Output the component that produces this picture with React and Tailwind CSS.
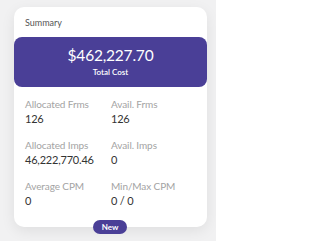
import React from "react";

const stats = [
  ["Allocated Frms", "126", "Avail. Frms", "126"],
  ["Allocated Imps", "46,222,770.46", "Avail. Imps", "0"],
  ["Average CPM", "0", "Min/Max CPM", "0 / 0"],
];

export default function App() {
  return (
    <div
      className="w-[216px] h-[241px] bg-[#f1f1f2] pt-[7px] pl-[14px] overflow-hidden"
      style={{ fontFamily: "Lato, 'Open Sans', sans-serif" }}
    >
      <div className="relative w-[193px] h-[220px] bg-white rounded-[10px] shadow-[0_4px_14px_rgba(0,0,0,0.08)]">
        {/* Header */}
        <div className="h-[30px] pl-[11px] pt-[11px] text-[9px] text-[#555] leading-none">
          Summary
        </div>

        {/* Total */}
        <div className="h-[50px] rounded-[8px] bg-[#4a3f97] flex flex-col items-center justify-center text-white">
          <div className="text-[15.5px] leading-none tracking-[-0.2px]">$462,227.70</div>
          <div className="text-[8px] font-semibold leading-none mt-[5px]">Total Cost</div>
        </div>

        {/* Stats */}
        <div className="pl-[11px] pt-[11px] flex flex-col gap-[14px]">
          {stats.map(([l1, v1, l2, v2]) => (
            <div key={l1} className="grid grid-cols-[86px_1fr]">
              <div>
                <div className="text-[10px] leading-[12px] tracking-[-0.1px] text-[#a3a3a3]">{l1}</div>
                <div className="text-[11px] leading-[13px] mt-[2px] tracking-[-0.2px] text-[#333]">{v1}</div>
              </div>
              <div>
                <div className="text-[10px] leading-[12px] tracking-[-0.1px] text-[#a3a3a3]">{l2}</div>
                <div className="text-[11px] leading-[13px] mt-[2px] tracking-[-0.2px] text-[#333]">{v2}</div>
              </div>
            </div>
          ))}
        </div>

        {/* Badge */}
        <div className="absolute left-[79px] top-[213px] w-[34px] h-[14px] rounded-full bg-[#4a3f97] text-white text-[8px] font-bold flex items-center justify-center">
          New
        </div>
      </div>
    </div>
  );
}
